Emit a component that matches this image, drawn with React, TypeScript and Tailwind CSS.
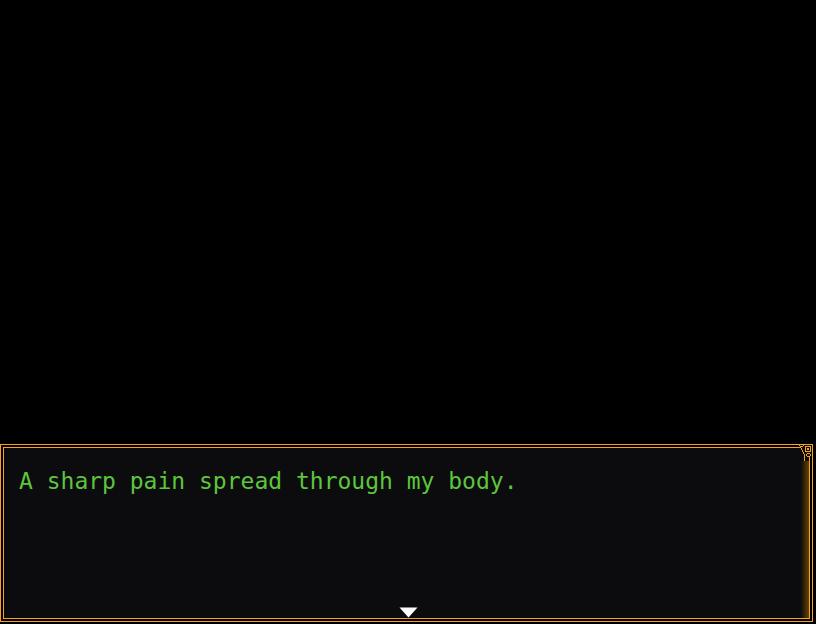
export default function App() {
  return (
    <div className="w-[816px] h-[624px] bg-black flex flex-col overflow-hidden">
      <div className="flex-1" />

      {/* Message window */}
      <div className="relative h-[178px] mr-[3px] mb-[2px] border border-[#f7a31c] p-[2px] bg-black">
        <div className="relative h-full border border-[#f7a31c] bg-[#0c0c0f] overflow-hidden">
          <div className="absolute right-0 top-0 bottom-0 w-[8px] bg-gradient-to-r from-transparent to-[#6b4200]" />
          <p
            className="pl-[15px] pt-[20px] text-[23px] leading-[27px] text-[#5cc63c]"
            style={{ fontFamily: '"DejaVu Sans Mono", "Liberation Mono", monospace' }}
          >
            A sharp pain spread through my body.
          </p>
        </div>

        {/* Corner ornament */}
        <svg
          className="absolute -top-px -right-px"
          width="17"
          height="17"
          viewBox="0 0 17 17"
          shapeRendering="crispEdges"
        >
          <rect x="0" y="1" width="16" height="16" fill="#0c0c0f" />
          <rect x="0" y="1" width="3" height="2" fill="black" />
          <rect x="0" y="0" width="3" height="1" fill="#f7a31c" />
          <rect x="0" y="3" width="5" height="1" fill="#f7a31c" />
          <rect x="5" y="4" width="1" height="2" fill="#f7a31c" />
          <rect x="6" y="6" width="1" height="2" fill="#f7a31c" />
          <rect x="7" y="8" width="1" height="2" fill="#f7a31c" />
          <rect x="8" y="10" width="1" height="7" fill="#f7a31c" />
          <rect x="14" y="0" width="3" height="1" fill="#f7a31c" />
          <rect x="16" y="0" width="1" height="17" fill="#f7a31c" />
          <rect x="13" y="13" width="3" height="4" fill="black" />
          <rect x="13" y="13" width="1" height="4" fill="#f7a31c" />
          {/* small ring */}
          <rect x="4" y="0" width="3" height="1" fill="#f7a31c" />
          <rect x="3" y="1" width="1" height="1" fill="#f7a31c" />
          <rect x="7" y="1" width="1" height="1" fill="#f7a31c" />
          <rect x="4" y="2" width="3" height="1" fill="#f7a31c" />
          {/* square ring with dot */}
          <rect x="9" y="2" width="6" height="1" fill="#f7a31c" />
          <rect x="9" y="7" width="6" height="1" fill="#f7a31c" />
          <rect x="9" y="3" width="1" height="4" fill="#f7a31c" />
          <rect x="14" y="3" width="1" height="4" fill="#f7a31c" />
          <rect x="11" y="4" width="2" height="2" fill="#f7a31c" />
          {/* lower ring */}
          <rect x="11" y="9" width="3" height="1" fill="#f7a31c" />
          <rect x="10" y="10" width="1" height="2" fill="#f7a31c" />
          <rect x="14" y="10" width="1" height="2" fill="#f7a31c" />
          <rect x="11" y="12" width="3" height="1" fill="#f7a31c" />
        </svg>

        {/* Continue arrow */}
        <svg
          className="absolute left-[398px] top-[162px]"
          width="19"
          height="11"
          viewBox="0 0 19 11"
        >
          <path d="M0.5 0.5 H18.5 L9.5 10.5 Z" fill="#ffffff" />
        </svg>
      </div>
    </div>
  )
}
